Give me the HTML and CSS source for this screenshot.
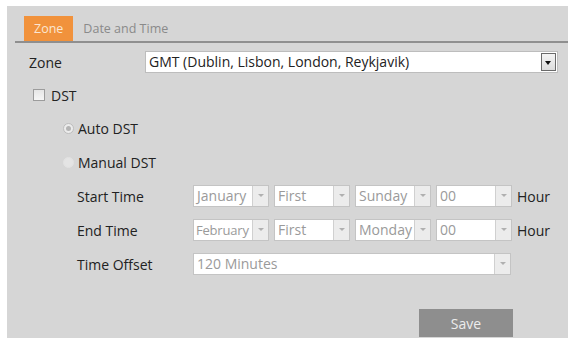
FILE: index.html
```html
<!DOCTYPE html>
<html lang="en">
<head>
    <meta charset="UTF-8">
    <title>Zone Settings</title>
    <link rel="stylesheet" href="styles.css">
</head>
<body>
    <div class="panel">
        <div class="tabs">
            <span class="tab active">Zone</span>
            <span class="tab">Date and Time</span>
        </div>

        <div class="row zone-row">
            <span class="label">Zone</span>
            <div class="select wide dark">
                <span class="value">GMT (Dublin, Lisbon, London, Reykjavik)</span>
                <span class="arrow"></span>
            </div>
        </div>

        <div class="row dst-row">
            <span class="check"></span>
            <span>DST</span>
        </div>

        <div class="row radio-row auto">
            <span class="radio on"></span>
            <span>Auto DST</span>
        </div>
        <div class="row radio-row">
            <span class="radio"></span>
            <span>Manual DST</span>
        </div>

        <div class="row sub-row">
            <span class="label">Start Time</span>
            <div class="select"><span class="value">January</span><span class="arrow"></span></div>
            <div class="select"><span class="value">First</span><span class="arrow"></span></div>
            <div class="select"><span class="value">Sunday</span><span class="arrow"></span></div>
            <div class="select"><span class="value">00</span><span class="arrow"></span></div>
            <span class="unit">Hour</span>
        </div>
        <div class="row sub-row">
            <span class="label">End Time</span>
            <div class="select"><span class="value tight">February</span><span class="arrow"></span></div>
            <div class="select"><span class="value">First</span><span class="arrow"></span></div>
            <div class="select"><span class="value">Monday</span><span class="arrow"></span></div>
            <div class="select"><span class="value">00</span><span class="arrow"></span></div>
            <span class="unit">Hour</span>
        </div>
        <div class="row sub-row">
            <span class="label">Time Offset</span>
            <div class="select offset"><span class="value">120 Minutes</span><span class="arrow"></span></div>
        </div>

        <div class="actions">
            <button type="button" class="save">Save</button>
        </div>
    </div>
</body>
</html>
```

FILE: styles.css
```css
body {
    margin: 0;
    background-color: #fff;
    font-family: "Open Sans", "Noto Sans", sans-serif;
    font-size: 14px;
    color: #222;
}

.panel {
    margin: 6px 0 0 7px;
    width: 561px;
    height: 332px;
    background-color: #d6d6d6;
    display: flex;
    flex-direction: column;
}

.tabs {
    margin: 10px 0 0 8px;
    padding-left: 9px;
    height: 25px;
    border-bottom: 2px solid #8f8f8f;
    display: flex;
    font-size: 12.5px;
}

.tab {
    padding: 0 10px;
    line-height: 25px;
    color: #8a8a8a;
}

.tab.active {
    background-color: #f1923c;
    color: #fbe6d2;
}

.row {
    height: 22px;
    display: flex;
    align-items: center;
    margin-top: 12px;
}

.zone-row {
    margin-top: 8px;
    padding-left: 22px;
}

.label {
    width: 116px;
    flex-shrink: 0;
}

.dst-row {
    margin-top: 11px;
    padding-left: 26px;
    gap: 6px;
}

.radio-row {
    padding-left: 56px;
    gap: 4px;
}

.radio-row.auto {
    margin-top: 11px;
}

.sub-row {
    padding-left: 70px;
}

/* fake select boxes */
.select {
    width: 76px;
    height: 22px;
    box-sizing: border-box;
    border: 1px solid #c4c4c4;
    background-color: #fff;
    display: flex;
    margin-right: 5px;
    color: #9a9a9a;
    overflow: hidden;
}

.select .value {
    flex: 1;
    padding-left: 3px;
    line-height: 20px;
    white-space: nowrap;
    overflow: hidden;
}

.select .value.tight {
    padding-left: 2px;
    font-size: 13px;
    letter-spacing: -0.2px;
}

.select .arrow {
    width: 15px;
    flex-shrink: 0;
    background-color: #ececec;
    border-left: 1px solid #d0d0d0;
    position: relative;
}

.select .arrow::after {
    content: "";
    position: absolute;
    left: 5px;
    top: 8px;
    border-left: 3px solid transparent;
    border-right: 3px solid transparent;
    border-top: 3px solid #b0b0b0;
}

.select.wide {
    width: 413px;
    margin-right: 0;
}

.select.dark {
    color: #222;
    border-color: #bdbdbd;
}

.select.dark .arrow {
    width: 13px;
    margin: 1px;
    border: 1px solid #6a6a6a;
    background: linear-gradient(#f4f4f4, #dcdcdc);
}

.select.dark .arrow::after {
    left: 3px;
    top: 7px;
    border-top: 4px solid #111;
}

.select.offset {
    width: 318px;
}

.check {
    width: 10px;
    height: 10px;
    border: 1px solid #9c9c9c;
    background: linear-gradient(#e6e6e6, #f6f6f6);
}

.radio {
    width: 9px;
    height: 9px;
    border-radius: 50%;
    border: 1px solid #bdbdbd;
    background-color: #ececec;
    position: relative;
}

.radio.on::after {
    content: "";
    position: absolute;
    left: 2px;
    top: 2px;
    width: 5px;
    height: 5px;
    border-radius: 50%;
    background-color: #b4b4b4;
}

.radio-row .radio:not(.on) {
    border-color: #e2e2e2;
    background-color: #e4e4e4;
}

.actions {
    margin-top: auto;
    display: flex;
    justify-content: flex-end;
    padding-right: 55px;
    padding-bottom: 1px;
}

.save {
    width: 94px;
    height: 28px;
    border: none;
    background-color: #8e8e8e;
    color: #ececec;
    font-family: inherit;
    font-size: 14px;
}
```
